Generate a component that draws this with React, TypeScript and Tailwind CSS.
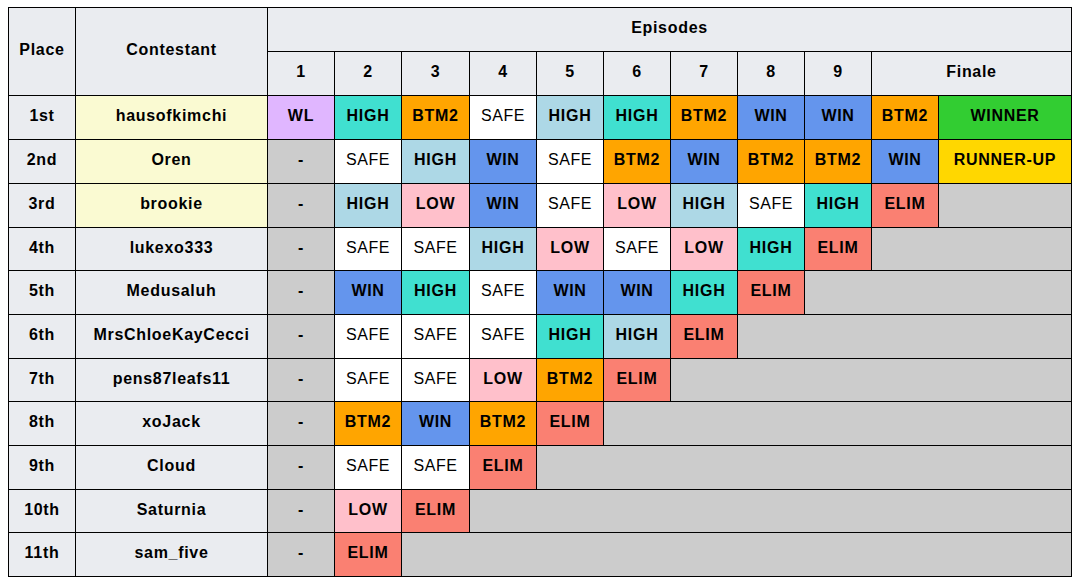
import React from "react";

type Result = "WL" | "HIGH" | "HIGH2" | "BTM2" | "SAFE" | "WIN" | "LOW" | "ELIM" | "WINNER" | "RUNNER-UP" | "-";

const RESULT_STYLE: Record<Result, { bg: string; label: string; bold: boolean }> = {
  WL: { bg: "bg-[#e0b6ff]", label: "WL", bold: true },
  HIGH: { bg: "bg-[#40e0d0]", label: "HIGH", bold: true },
  HIGH2: { bg: "bg-[#add8e6]", label: "HIGH", bold: true },
  BTM2: { bg: "bg-[#ffa500]", label: "BTM2", bold: true },
  SAFE: { bg: "bg-white", label: "SAFE", bold: false },
  WIN: { bg: "bg-[#6495ed]", label: "WIN", bold: true },
  LOW: { bg: "bg-[#ffc0cb]", label: "LOW", bold: true },
  ELIM: { bg: "bg-[#fa8072]", label: "ELIM", bold: true },
  WINNER: { bg: "bg-[#32cd32]", label: "WINNER", bold: true },
  "RUNNER-UP": { bg: "bg-[#ffd700]", label: "RUNNER-UP", bold: true },
  "-": { bg: "bg-[#cccccc]", label: "-", bold: true },
};

// gray filler after elimination, spans the remaining columns
const SPAN: Record<number, string> = {
  1: "col-span-1",
  2: "col-span-2",
  3: "col-span-3",
  4: "col-span-4",
  5: "col-span-5",
  6: "col-span-6",
  7: "col-span-7",
  8: "col-span-8",
  9: "col-span-9",
};

interface Contestant {
  place: string;
  name: string;
  finalist: boolean;
  results: Result[];
}

const CONTESTANTS: Contestant[] = [
  { place: "1st", name: "hausofkimchi", finalist: true, results: ["WL", "HIGH", "BTM2", "SAFE", "HIGH2", "HIGH", "BTM2", "WIN", "WIN", "BTM2", "WINNER"] },
  { place: "2nd", name: "Oren", finalist: true, results: ["-", "SAFE", "HIGH2", "WIN", "SAFE", "BTM2", "WIN", "BTM2", "BTM2", "WIN", "RUNNER-UP"] },
  { place: "3rd", name: "brookie", finalist: true, results: ["-", "HIGH2", "LOW", "WIN", "SAFE", "LOW", "HIGH2", "SAFE", "HIGH", "ELIM"] },
  { place: "4th", name: "lukexo333", finalist: false, results: ["-", "SAFE", "SAFE", "HIGH2", "LOW", "SAFE", "LOW", "HIGH", "ELIM"] },
  { place: "5th", name: "Medusaluh", finalist: false, results: ["-", "WIN", "HIGH", "SAFE", "WIN", "WIN", "HIGH", "ELIM"] },
  { place: "6th", name: "MrsChloeKayCecci", finalist: false, results: ["-", "SAFE", "SAFE", "SAFE", "HIGH", "HIGH2", "ELIM"] },
  { place: "7th", name: "pens87leafs11", finalist: false, results: ["-", "SAFE", "SAFE", "LOW", "BTM2", "ELIM"] },
  { place: "8th", name: "xoJack", finalist: false, results: ["-", "BTM2", "WIN", "BTM2", "ELIM"] },
  { place: "9th", name: "Cloud", finalist: false, results: ["-", "SAFE", "SAFE", "ELIM"] },
  { place: "10th", name: "Saturnia", finalist: false, results: ["-", "LOW", "ELIM"] },
  { place: "11th", name: "sam_five", finalist: false, results: ["-", "ELIM"] },
];

const TOTAL_COLS = 11;

const cell = "flex items-center justify-center pb-[3px] text-center text-black";
const bold = "font-bold tracking-[0.7px]";

export default function App() {
  return (
    <div className="min-h-[587px] w-[1077px] bg-white pl-[8px] pt-[7px] font-['Liberation_Sans',Arial,sans-serif] text-[16px]">
      <div className="grid w-max grid-cols-[66px_191px_66px_66px_67px_66px_66px_66px_66px_66px_66px_66px_132px] grid-rows-[43px_43px_43px_43px_43px_42px_43px_43px_42px_43px_43px_42px_43px] gap-px bg-black p-px">
        {/* ── Header ── */}
        <div className={`${cell} ${bold} row-span-2 bg-[#eaecf0]`}>Place</div>
        <div className={`${cell} ${bold} row-span-2 bg-[#eaecf0]`}>Contestant</div>
        <div className={`${cell} ${bold} col-span-11 bg-[#eaecf0]`}>Episodes</div>
        {["1", "2", "3", "4", "5", "6", "7", "8", "9"].map((ep) => (
          <div key={ep} className={`${cell} ${bold} bg-[#eaecf0]`}>
            {ep}
          </div>
        ))}
        <div className={`${cell} ${bold} col-span-2 bg-[#eaecf0]`}>Finale</div>

        {/* ── Rows ── */}
        {CONTESTANTS.map((c) => (
          <React.Fragment key={c.place}>
            <div className={`${cell} ${bold} bg-[#eaecf0]`}>{c.place}</div>
            <div className={`${cell} ${bold} ${c.finalist ? "bg-[#fafad2]" : "bg-[#eaecf0]"}`}>{c.name}</div>
            {c.results.map((r, i) => {
              const s = RESULT_STYLE[r];
              return (
                <div key={i} className={`${cell} ${s.bg} ${s.bold ? bold : "tracking-[0.6px]"}`}>
                  {s.label}
                </div>
              );
            })}
            {c.results.length < TOTAL_COLS && (
              <div className={`${SPAN[TOTAL_COLS - c.results.length]} bg-[#cccccc]`} />
            )}
          </React.Fragment>
        ))}
      </div>
    </div>
  );
}
